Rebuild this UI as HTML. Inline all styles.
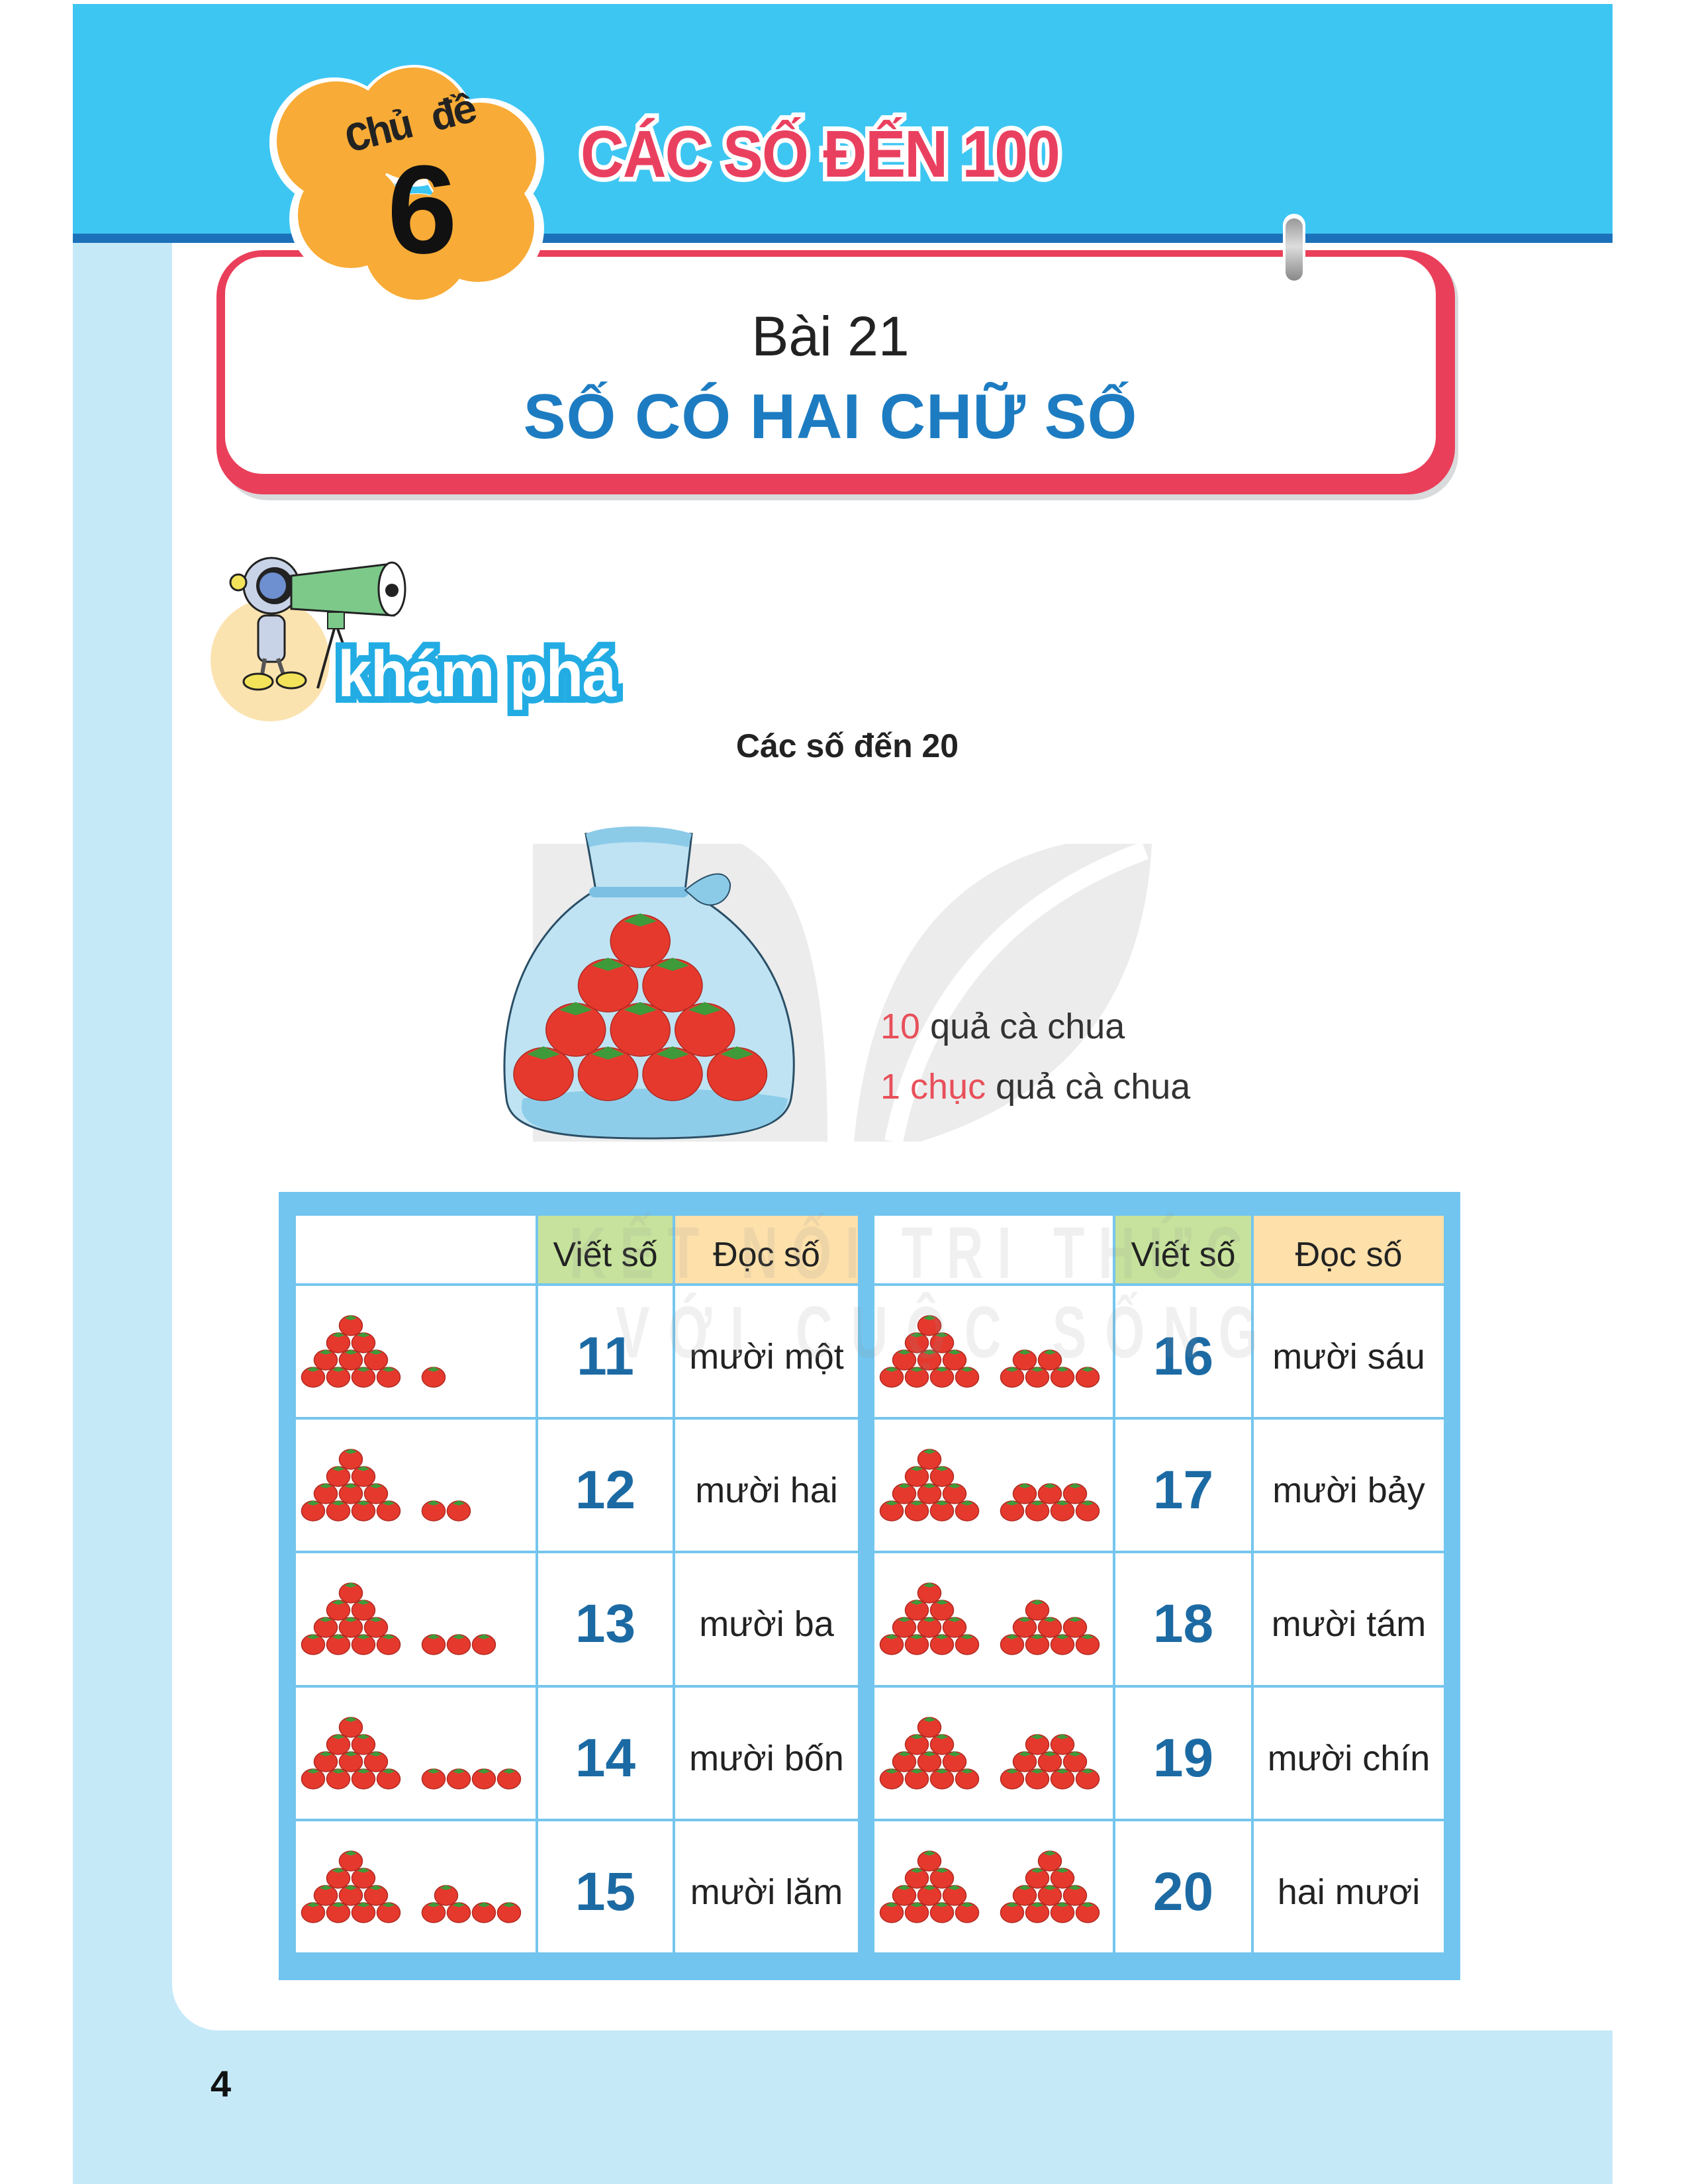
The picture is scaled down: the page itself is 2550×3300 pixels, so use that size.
<!DOCTYPE html>
<html><head><meta charset="utf-8">
<style>
*{margin:0;padding:0;box-sizing:border-box}
html,body{width:2550px;height:3300px;background:#fff;overflow:hidden}
body{position:relative;font-family:"Liberation Sans",sans-serif}
.abs{position:absolute}
.tbl{position:absolute;display:grid;background:#74c6ee;gap:4px}
.tbl>div{background:#fff;display:flex;align-items:center;justify-content:center;position:relative;padding-top:16px}
.h1{background:#c6e29c!important;font-size:52px;color:#222}
.h2{background:#fde0aa!important;font-size:52px;color:#222}
.num{font-size:82px;font-weight:bold;color:#1c6aa3}
.wd{font-size:54px;color:#222}
</style></head><body>
<div class="abs" style="left:110px;top:6px;width:2326px;height:3294px;background:#c6e9f8"></div>
<div class="abs" style="left:110px;top:6px;width:2326px;height:350px;background:#3ec6f2"></div>
<div class="abs" style="left:110px;top:353px;width:2326px;height:14px;background:#1b72ba"></div>
<div class="abs" style="left:260px;top:367px;width:2176px;height:2701px;background:#fff;border-bottom-left-radius:70px"></div>

<div class="abs" style="left:335px;top:384px;width:1868px;height:372px;border-radius:70px;background:#d8dadc"></div>
<div class="abs" style="left:327px;top:378px;width:1871px;height:369px;border-radius:70px;background:#ea3f5a"></div>
<div class="abs" style="left:340px;top:388px;width:1829px;height:328px;border-radius:56px;background:#fff"></div>
<div class="abs" style="left:340px;top:460px;width:1829px;text-align:center;font-size:84px;color:#222">Bài 21</div>
<div class="abs" style="left:340px;top:575px;width:1829px;text-align:center;font-size:96px;font-weight:bold;color:#1d7cc1;letter-spacing:1px">SỐ CÓ HAI CHỮ SỐ</div>
<div class="abs" style="left:1938px;top:323px;width:34px;height:107px;border-radius:17px;background:#fff"></div>
<div class="abs" style="left:1942px;top:330px;width:26px;height:94px;border-radius:13px;background:linear-gradient(#999,#ddd 45%,#888)"></div>

<svg class="abs" style="left:390px;top:95px" width="480" height="380" viewBox="0 0 480 380">
<g fill="#fff">
<circle cx="115" cy="120" r="98"/><circle cx="235" cy="95" r="92"/><circle cx="340" cy="145" r="92"/>
<circle cx="340" cy="250" r="92"/><circle cx="240" cy="285" r="88"/><circle cx="135" cy="235" r="88"/></g>
<g fill="#f8ab36">
<circle cx="118" cy="118" r="90"/><circle cx="235" cy="92" r="85"/><circle cx="335" cy="145" r="85"/>
<circle cx="332" cy="246" r="85"/><circle cx="240" cy="278" r="80"/><circle cx="140" cy="230" r="80"/></g>
</svg>
<div class="abs" style="left:515px;top:180px;font-family:'Liberation Mono',monospace;font-weight:bold;font-size:62px;color:#222;transform:rotate(-14deg);transform-origin:left top;white-space:nowrap;letter-spacing:-4px">Chủ đề</div>
<div class="abs" style="left:585px;top:222px;font-size:190px;font-weight:bold;color:#111;line-height:1">6</div>
<div class="abs" style="left:877px;top:178px;font-size:100px;font-weight:bold;color:#ea4060;-webkit-text-stroke:14px #fff;paint-order:stroke fill;letter-spacing:-2px;transform:scaleX(0.91);transform-origin:left top;white-space:nowrap;line-height:1.1">CÁC SỐ ĐẾN 100</div>

<div class="abs" style="left:318px;top:905px;width:180px;height:185px;border-radius:50%;background:#fbe3b0"></div>
<svg class="abs" style="left:330px;top:830px" width="300" height="230" viewBox="0 0 300 230">
<line x1="175" y1="120" x2="150" y2="210" stroke="#222" stroke-width="4"/>
<line x1="180" y1="120" x2="205" y2="190" stroke="#222" stroke-width="4"/>
<rect x="60" y="100" width="40" height="70" rx="12" fill="#c9d3e8" stroke="#222" stroke-width="3"/>
<line x1="70" y1="165" x2="65" y2="195" stroke="#555" stroke-width="6"/><line x1="90" y1="165" x2="100" y2="195" stroke="#555" stroke-width="6"/>
<ellipse cx="60" cy="200" rx="22" ry="12" fill="#f2e35a" stroke="#222" stroke-width="3"/>
<ellipse cx="110" cy="198" rx="22" ry="12" fill="#f2e35a" stroke="#222" stroke-width="3"/>
<circle cx="80" cy="55" r="42" fill="#c9d3e8" stroke="#222" stroke-width="3"/>
<circle cx="85" cy="55" r="28" fill="#222"/><circle cx="82" cy="55" r="20" fill="#6e8fd0"/>
<circle cx="30" cy="50" r="12" fill="#f2e35a" stroke="#222" stroke-width="3"/>
<path d="M110 40 L260 22 L265 100 L110 90 Z" fill="#7cc98a" stroke="#222" stroke-width="3"/>
<ellipse cx="262" cy="60" rx="20" ry="40" fill="#fff" stroke="#222" stroke-width="3"/>
<circle cx="262" cy="62" r="10" fill="#222"/>
<rect x="165" y="95" width="25" height="25" fill="#7cc98a" stroke="#222" stroke-width="2"/>
</svg>
<div class="abs" style="left:510px;top:965px;font-size:98px;font-weight:bold;color:#fff;-webkit-text-stroke:20px #22ace3;paint-order:stroke fill;letter-spacing:-2px;white-space:nowrap;line-height:1.1;transform:scaleX(0.95);transform-origin:left top">khám phá</div>

<div class="abs" style="left:1000px;top:1098px;width:560px;text-align:center;font-size:50px;font-weight:bold;color:#222">Các số đến 20</div>

<svg class="abs" style="left:790px;top:1265px" width="960" height="470" viewBox="0 0 960 470">
<path d="M15 10 L330 10 C420 60 460 200 460 460 L15 460 Z" fill="#ececec"/>
<path d="M500 460 C520 250 600 60 820 10 L950 10 C940 200 860 380 600 460 Z" fill="#ececec"/>
<path d="M560 460 C600 260 720 100 940 20" fill="none" stroke="#fff" stroke-width="28"/>
</svg>

<svg class="abs" style="left:735px;top:1240px" width="490" height="490" viewBox="0 0 490 490">
<path d="M150 20 L310 20 L300 105 C430 170 480 300 460 420 C450 470 370 480 245 480 C110 480 35 470 30 420 C15 300 55 170 165 105 Z" fill="#bfe3f3" stroke="#2a4f66" stroke-width="3"/>
<path d="M55 420 C150 400 360 400 455 420 C450 470 370 478 245 478 C110 478 40 470 55 420Z" fill="#8dcde9"/>
<path d="M150 20 C180 5 270 5 310 20 L305 40 C260 30 190 30 155 40Z" fill="#8ccbe8"/>
<rect x="155" y="100" width="150" height="16" rx="8" fill="#7cc1e4"/>
<path d="M300 105 C330 80 360 70 368 95 C370 120 340 140 315 118 Z" fill="#8ccbe8" stroke="#2a4f66" stroke-width="2"/>
<g id="bagT"></g>
</svg>

<div class="abs" style="left:1330px;top:1520px;font-size:54px;color:#333;white-space:nowrap"><span style="color:#e8505a">10</span> quả cà chua</div>
<div class="abs" style="left:1330px;top:1611px;font-size:54px;color:#333;white-space:nowrap"><span style="color:#e8505a">1 chục</span> quả cà chua</div>

<div class="abs" style="left:421px;top:1801px;width:1785px;height:1191px;background:#72c5ee"></div>
<div class="tbl" id="L" style="left:447px;top:1837px;width:849px;height:1113px;grid-template-columns:362px 203px 276px;grid-template-rows:102px repeat(5,1fr)"></div>
<div class="tbl" id="R" style="left:1321px;top:1837px;width:860px;height:1113px;grid-template-columns:360px 205px 287px;grid-template-rows:102px repeat(5,1fr)"></div>
<div class="abs" style="left:860px;top:1830px;font-size:110px;font-weight:bold;color:rgba(150,150,150,.14);letter-spacing:30px;white-space:nowrap;transform:scaleX(.7);transform-origin:left top">KẾT NỐI TRI THỨC</div>
<div class="abs" style="left:930px;top:1950px;font-size:110px;font-weight:bold;color:rgba(150,150,150,.14);letter-spacing:40px;white-space:nowrap;transform:scaleX(.7);transform-origin:left top">VỚI CUỘC SỐNG</div>

<div class="abs" style="left:318px;top:3116px;font-size:56px;font-weight:bold;color:#111">4</div>

<script>
function tom(cx,cy,rx,ry){
 var s='<ellipse cx="'+cx+'" cy="'+cy+'" rx="'+rx+'" ry="'+ry+'" fill="#e6392d" stroke="#b02a22" stroke-width="1.5"/>';
 var w=rx*0.55,t=cy-ry;
 s+='<path d="M'+(cx-w)+' '+(t+ry*0.25)+' L'+cx+' '+(t-ry*0.05)+' L'+(cx+w)+' '+(t+ry*0.25)+' L'+cx+' '+(t+ry*0.45)+' Z" fill="#3f9a3a"/>';
 return s;
}
var b='',rows=[[0,1,2,3],[0.5,1.5,2.5],[1,2],[1.5]];
rows.forEach(function(r,i){r.forEach(function(k){b+=tom(86+k*97.5,383-i*67,45,40);});});
document.getElementById('bagT').innerHTML=b;
function tri(xs,y0,arr){var s='';arr.forEach(function(n,i){for(var k=0;k<n;k++){s+=tom(xs+(k+i*0.5)*38,y0-i*26,17.5,15);}});return s;}
function extras(n){var m={1:[1],2:[2],3:[3],4:[4],5:[4,1],6:[4,2],7:[4,3],8:[4,3,1],9:[4,3,2],10:[4,3,2,1]};return m[n];}
function cellSvg(n){
 var s='<svg width="360" height="199" viewBox="0 0 360 199" style="position:absolute;left:0;top:0">';
 s+=tri(26,138,[4,3,2,1]);
 s+=tri(208,138,extras(n));
 return s+'</svg>';
}
var words={11:'mười một',12:'mười hai',13:'mười ba',14:'mười bốn',15:'mười lăm',16:'mười sáu',17:'mười bảy',18:'mười tám',19:'mười chín',20:'hai mươi'};
function build(id,start){
 var h='<div></div><div class="h1">Viết số</div><div class="h2">Đọc số</div>';
 for(var i=0;i<5;i++){var n=start+i;
  h+='<div>'+cellSvg(n-10)+'</div><div class="num">'+n+'</div><div class="wd">'+words[n]+'</div>';}
 document.getElementById(id).innerHTML=h;
}
build('L',11);build('R',16);
</script>
</body></html>
